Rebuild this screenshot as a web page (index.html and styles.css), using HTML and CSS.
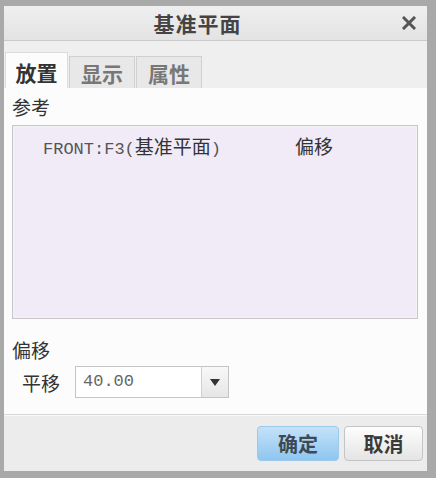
FILE: index.html
```html
<!DOCTYPE html>
<html lang="zh-CN">
<head>
    <meta charset="UTF-8">
    <title>基准平面</title>
    <link rel="stylesheet" href="styles.css">
</head>
<body>
    <div class="dialog">
        <div class="titlebar">
            <div class="title">基准平面</div>
            <div class="close">
                <svg width="14" height="14" viewBox="0 0 14 14">
                    <path d="M2 2 L12 12 M12 2 L2 12" stroke="#555" stroke-width="3" stroke-linecap="square"/>
                </svg>
            </div>
        </div>

        <div class="tabs">
            <div class="tab active">放置</div>
            <div class="tab">显示</div>
            <div class="tab">属性</div>
        </div>

        <div class="panel">
            <div class="label">参考</div>
            <div class="ref-list">
                <div class="ref-row">
                    <span class="ref-name"><span class="mono">FRONT:F3(</span>基准平面<span class="mono">)</span></span>
                    <span class="ref-type">偏移</span>
                </div>
            </div>

            <div class="label offset-label">偏移</div>
            <div class="field-row">
                <span class="field-label">平移</span>
                <div class="combo">
                    <div class="combo-value">40.00</div>
                    <div class="combo-btn"><span class="arrow"></span></div>
                </div>
            </div>
        </div>

        <div class="footer">
            <button class="btn primary">确定</button>
            <button class="btn">取消</button>
        </div>
    </div>
</body>
</html>
```

FILE: styles.css
```css
body {
    margin: 0;
    font-family: "Noto Sans CJK SC", "Liberation Sans", sans-serif;
    color: #333;
}

.dialog {
    width: 436px;
    height: 478px;
    box-sizing: border-box;
    border-style: solid;
    border-color: #a9a9a9;
    border-width: 6px 9px 7px 4px;
    background: #efefef;
    display: flex;
    flex-direction: column;
}

.titlebar {
    height: 34px;
    display: flex;
    align-items: center;
    background: linear-gradient(#efefef, #e3e3e3);
    border-bottom: 1px solid #cbcbcb;
}

.title {
    flex: 1;
    text-align: center;
    font-size: 21px;
    font-weight: bold;
    color: #444;
    letter-spacing: 1px;
}

.close {
    width: 36px;
    display: flex;
    justify-content: center;
    align-items: center;
}

.tabs {
    height: 47px;
    display: flex;
    align-items: flex-end;
    padding-left: 1px;
    background: #efefef;
}

.tab {
    height: 32px;
    width: 66px;
    box-sizing: border-box;
    margin-left: 1px;
    border: 1px solid #d0d0d0;
    border-bottom: none;
    background: #e8e8e8;
    font-size: 21px;
    font-weight: bold;
    color: #777;
    text-align: center;
    line-height: 32px;
}

.tab.active {
    height: 36px;
    width: 63px;
    margin-left: 0;
    background: #fcfcfc;
    color: #333;
    line-height: 38px;
    border-color: #dcdcdc;
}

.panel {
    flex: 1;
    background: #fcfcfc;
    padding: 3px 9px 0 8px;
    border-bottom: 1px solid #d8d8d8;
}

.label {
    font-size: 19px;
    line-height: 32px;
    color: #333;
}

.ref-list {
    margin-top: 2px;
    height: 194px;
    box-sizing: border-box;
    border: 1px solid #c6c6c6;
    box-shadow: inset 0 0 0 1px #f4f4f4;
    background: #f1ebf8;
    padding: 8px 0 0 30px;
}

.ref-row {
    display: flex;
    line-height: 24px;
    font-size: 19px;
    color: #333;
}

.ref-name {
    width: 252px;
}

.mono {
    font-family: "Liberation Mono", monospace;
    font-size: 17px;
    color: #555;
}

.offset-label {
    margin-top: 15px;
}

.field-row {
    display: flex;
    align-items: center;
    padding-left: 10px;
}

.field-label {
    font-size: 19px;
    width: 53px;
}

.combo {
    display: flex;
    height: 32px;
    border: 1px solid #c4c4c4;
    box-sizing: border-box;
    width: 154px;
}

.combo-value {
    flex: 1;
    background: #fff;
    font-family: "Liberation Mono", monospace;
    font-size: 17px;
    color: #666;
    line-height: 30px;
    padding-left: 7px;
}

.combo-btn {
    width: 26px;
    border-left: 1px solid #d0d0d0;
    background: linear-gradient(#f8f8f8, #e6e6e6);
    display: flex;
    justify-content: center;
    align-items: center;
}

.arrow {
    width: 0;
    height: 0;
    border-left: 5px solid transparent;
    border-right: 5px solid transparent;
    border-top: 7px solid #333;
}

.footer {
    height: 55px;
    display: flex;
    justify-content: flex-end;
    align-items: center;
    gap: 5px;
    padding-right: 4px;
    background: #ececed;
    border-top: 1px solid #f8f8f8;
}

.btn {
    height: 35px;
    width: 79px;
    border: 1px solid #c4c4c4;
    border-radius: 4px;
    background: linear-gradient(#fdfdfd, #e4e4e4);
    font-family: "Noto Sans CJK SC", sans-serif;
    font-size: 20px;
    font-weight: bold;
    color: #3a3a3a;
    padding: 0;
}

.btn.primary {
    width: 82px;
    border-color: #9cc8ea;
    background: linear-gradient(#c4e2f8, #8ec6f0);
    color: #3d4a55;
}
```
